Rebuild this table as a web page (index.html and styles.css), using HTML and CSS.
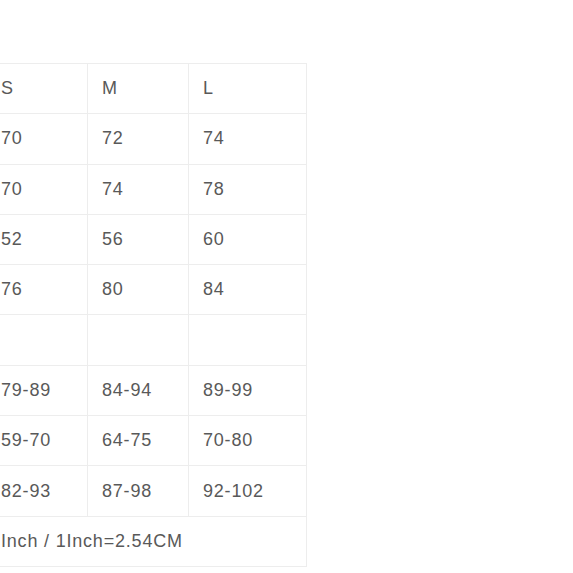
FILE: index.html
```html
<!DOCTYPE html>
<html>
<head>
<meta charset="utf-8">
<link rel="stylesheet" href="styles.css">
</head>
<body>
<div class="wrap">
  <table class="size-table">
    <colgroup>
      <col class="c-s"><col class="c-m"><col class="c-l">
    </colgroup>
    <tr><td>S</td><td>M</td><td>L</td></tr>
    <tr><td>70</td><td>72</td><td>74</td></tr>
    <tr><td>70</td><td>74</td><td>78</td></tr>
    <tr><td>52</td><td>56</td><td>60</td></tr>
    <tr><td>76</td><td>80</td><td>84</td></tr>
    <tr><td></td><td></td><td></td></tr>
    <tr><td>79-89</td><td>84-94</td><td>89-99</td></tr>
    <tr><td>59-70</td><td>64-75</td><td>70-80</td></tr>
    <tr><td>82-93</td><td>87-98</td><td>92-102</td></tr>
    <tr><td colspan="3">Inch / 1Inch=2.54CM</td></tr>
  </table>
</div>
</body>
</html>
```
FILE: styles.css
```css
html, body {
  margin: 0;
  padding: 0;
  background: #fff;
}
.wrap {
  padding-top: 63px;
  overflow: hidden;
  width: 573px;
  height: 510px;
}
.size-table {
  border-collapse: collapse;
  margin-left: -14px;
  table-layout: fixed;
  width: 320px;
  font-family: "Liberation Sans", Arial, sans-serif;
  font-size: 18px;
  letter-spacing: 0.8px;
  color: #595959;
}
.c-s { width: 101px; }
.c-m { width: 101px; }
.c-l { width: 118px; }
.size-table td {
  border: 1px solid #ededed;
  height: 49.3px;
  padding: 0 14px;
  vertical-align: middle;
  white-space: nowrap;
}
```
